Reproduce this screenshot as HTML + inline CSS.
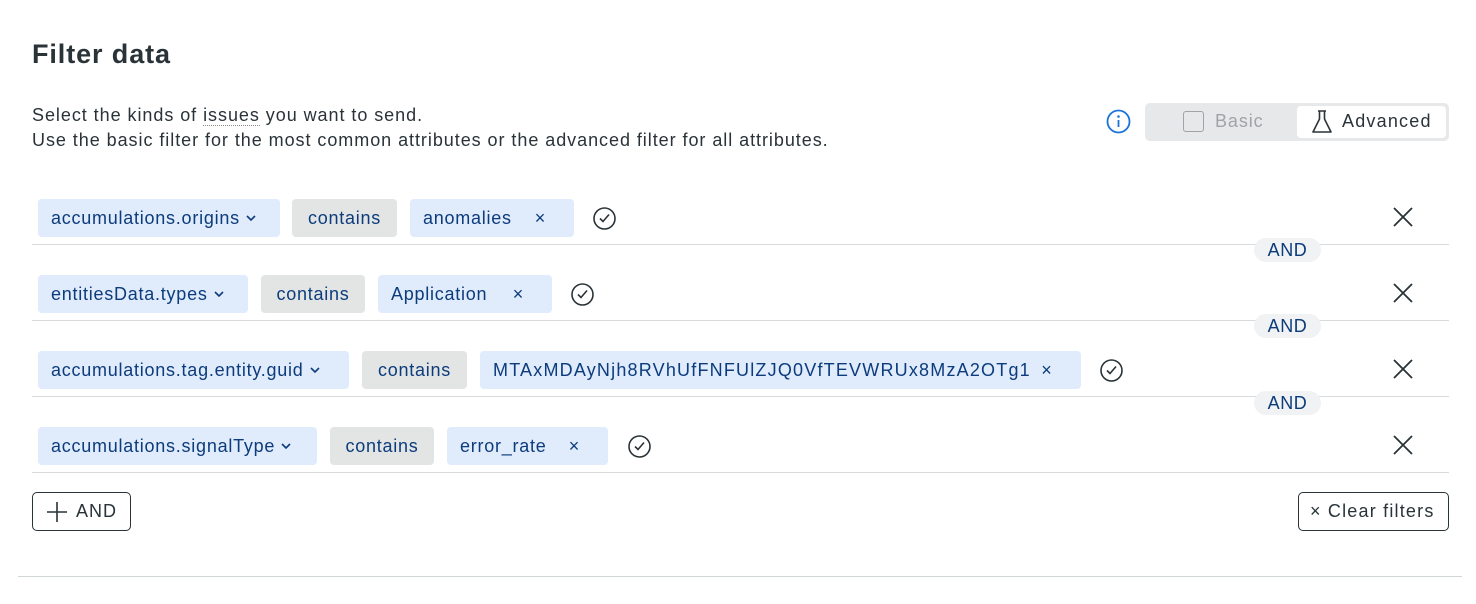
<!DOCTYPE html>
<html><head><meta charset="utf-8"><style>
*{box-sizing:border-box;margin:0;padding:0}
body{width:1476px;height:604px;background:#fff;font-family:"Liberation Sans",sans-serif;color:#293338;position:relative;overflow:hidden}
.a{position:absolute}
h1{position:absolute;left:32px;top:39px;font-size:27px;font-weight:bold;color:#293338;letter-spacing:0.9px}
.p{position:absolute;left:32px;font-size:18px;color:#293338;white-space:nowrap;letter-spacing:0.95px}
.chip{position:absolute;height:38px;border-radius:4px;font-size:18px;line-height:38px;padding-left:13px;white-space:nowrap;letter-spacing:0.75px}
.f{background:#e0ebfc;color:#0c3c7c}
.c{background:#e3e4e4;color:#0c3c7c;text-align:center;padding:0}
.x{position:absolute;right:28px;top:0}
.line{position:absolute;left:32px;width:1417px;height:1px;background:#d8dadb}
.and{position:absolute;left:1254px;width:67px;height:24px;border-radius:12px;background:#f0f2f3;color:#0c3c7c;font-size:18px;line-height:24px;text-align:center;letter-spacing:0.6px}
.btn{position:absolute;border:1.5px solid #293338;border-radius:5px;font-size:18px;color:#293338;background:#fff;letter-spacing:1px}
.chev{display:inline-block;vertical-align:middle;margin-left:6px;margin-top:-3px}
</style></head><body>
<h1>Filter data</h1>
<div class="p" style="top:105px">Select the kinds of <span style="border-bottom:1px dotted #888">issues</span> you want to send.</div>
<div class="p" style="top:130px">Use the basic filter for the most common attributes or the advanced filter for all attributes.</div>
<svg class="a" style="left:1106px;top:109px" width="25" height="25" viewBox="0 0 25 25"><circle cx="12.5" cy="12.5" r="11" fill="none" stroke="#1a73d9" stroke-width="1.8"/><circle cx="12.5" cy="7.5" r="1.3" fill="#1a73d9"/><path d="M12.5 11v7" stroke="#1a73d9" stroke-width="1.8"/></svg>
<div class="a" style="left:1145px;top:103px;width:304px;height:38px;background:#e7e8e9;border-radius:5px"></div>
<div class="a" style="left:1183px;top:111px;width:21px;height:21px;border:1.6px solid #a0a4a6;border-radius:3px"></div>
<div class="a" style="left:1215px;top:111px;font-size:18px;color:#a0a4a6;letter-spacing:0.9px">Basic</div>
<div class="a" style="left:1297px;top:106px;width:149px;height:32px;background:#fff;border-radius:4px"></div>
<svg class="a" style="left:1311px;top:109px" width="22" height="26" viewBox="0 0 22 26"><path d="M7 2h8M8.5 2v8L2 23h18L13.5 10V2" fill="none" stroke="#293338" stroke-width="1.6" stroke-linejoin="round"/></svg>
<div class="a" style="left:1342px;top:111px;font-size:18px;color:#293338;letter-spacing:1.2px">Advanced</div>

<!-- row1 -->
<div class="chip f" style="left:38px;top:199px;width:242px">accumulations.origins<svg class="chev" width="10" height="8"><path d="M1 2l4 4 4-4" fill="none" stroke="#0c3c7c" stroke-width="1.6"/></svg></div>
<div class="chip c" style="left:292px;top:199px;width:105px">contains</div>
<div class="chip f" style="left:410px;top:199px;width:164px">anomalies<span class="x">×</span></div>
<svg class="a" style="left:592px;top:206px" width="25" height="25" viewBox="0 0 25 25"><circle cx="12.5" cy="12.5" r="10.5" fill="none" stroke="#293338" stroke-width="1.6"/><path d="M8 12.5l3 3 6-7" fill="none" stroke="#293338" stroke-width="1.6"/></svg>
<div class="line" style="top:244px"></div>
<div class="and" style="top:238px">AND</div>
<!-- row2 -->
<div class="chip f" style="left:38px;top:275px;width:210px">entitiesData.types<svg class="chev" width="10" height="8"><path d="M1 2l4 4 4-4" fill="none" stroke="#0c3c7c" stroke-width="1.6"/></svg></div>
<div class="chip c" style="left:261px;top:275px;width:104px">contains</div>
<div class="chip f" style="left:378px;top:275px;width:174px">Application<span class="x">×</span></div>
<svg class="a" style="left:570px;top:282px" width="25" height="25" viewBox="0 0 25 25"><circle cx="12.5" cy="12.5" r="10.5" fill="none" stroke="#293338" stroke-width="1.6"/><path d="M8 12.5l3 3 6-7" fill="none" stroke="#293338" stroke-width="1.6"/></svg>
<div class="line" style="top:320px"></div>
<div class="and" style="top:314px">AND</div>
<!-- row3 -->
<div class="chip f" style="left:38px;top:351px;width:311px">accumulations.tag.entity.guid<svg class="chev" width="10" height="8"><path d="M1 2l4 4 4-4" fill="none" stroke="#0c3c7c" stroke-width="1.6"/></svg></div>
<div class="chip c" style="left:362px;top:351px;width:105px">contains</div>
<div class="chip f" style="left:480px;top:351px;width:601px;letter-spacing:1.2px">MTAxMDAyNjh8RVhUfFNFUlZJQ0VfTEVWRUx8MzA2OTg1<span class="x">×</span></div>
<svg class="a" style="left:1099px;top:358px" width="25" height="25" viewBox="0 0 25 25"><circle cx="12.5" cy="12.5" r="10.5" fill="none" stroke="#293338" stroke-width="1.6"/><path d="M8 12.5l3 3 6-7" fill="none" stroke="#293338" stroke-width="1.6"/></svg>
<div class="line" style="top:396px"></div>
<div class="and" style="top:391px">AND</div>
<!-- row4 -->
<div class="chip f" style="left:38px;top:427px;width:279px">accumulations.signalType<svg class="chev" width="10" height="8"><path d="M1 2l4 4 4-4" fill="none" stroke="#0c3c7c" stroke-width="1.6"/></svg></div>
<div class="chip c" style="left:330px;top:427px;width:104px">contains</div>
<div class="chip f" style="left:447px;top:427px;width:161px">error_rate<span class="x">×</span></div>
<svg class="a" style="left:627px;top:434px" width="25" height="25" viewBox="0 0 25 25"><circle cx="12.5" cy="12.5" r="10.5" fill="none" stroke="#293338" stroke-width="1.6"/><path d="M8 12.5l3 3 6-7" fill="none" stroke="#293338" stroke-width="1.6"/></svg>
<div class="line" style="top:472px"></div>

<svg class="a" style="left:1392px;top:206px" width="22" height="250" viewBox="0 0 22 250"><g stroke="#293338" stroke-width="1.8"><path d="M2 2l18 18M20 2L2 20"/><path d="M2 78l18 18M20 78L2 96"/><path d="M2 154l18 18M20 154L2 172"/><path d="M2 230l18 18M20 230L2 248"/></g></svg>

<div class="btn" style="left:32px;top:492px;width:99px;height:39px"><svg class="a" style="left:13px;top:8px" width="22" height="22"><path d="M11 1v20M1 11h20" stroke="#293338" stroke-width="1.6"/></svg><span class="a" style="left:43px;top:8px">AND</span></div>
<div class="btn" style="left:1298px;top:492px;width:151px;height:39px"><span class="a" style="left:11px;top:8px;white-space:nowrap;letter-spacing:1.2px">× Clear filters</span></div>
<div class="a" style="left:18px;top:576px;width:1444px;height:1px;background:#d0d5d8"></div>
</body></html>
